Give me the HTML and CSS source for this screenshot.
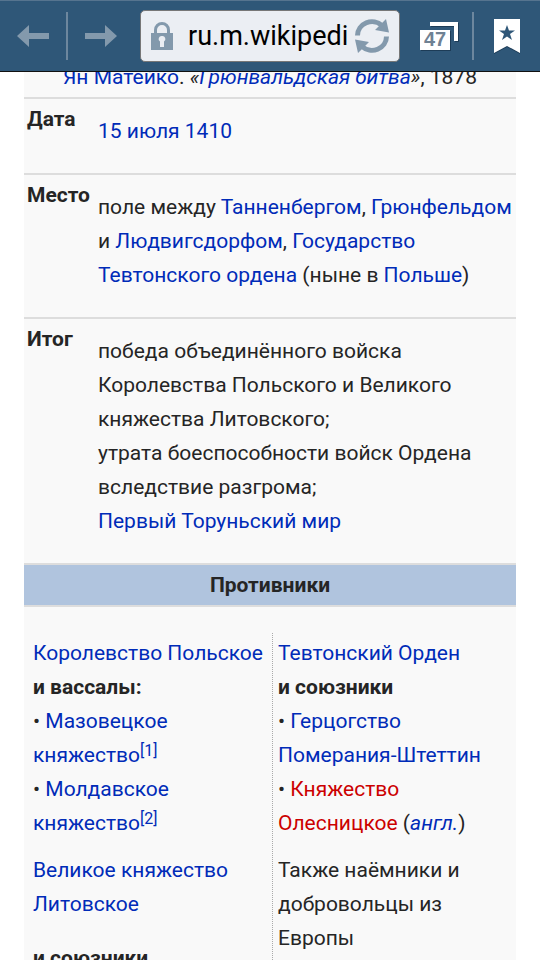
FILE: index.html
```
<!DOCTYPE html>
<html lang="ru">
<head>
	<meta charset="utf-8">
	<meta name="viewport" content="width=device-width, initial-scale=1">
	<title>Грюнвальдская битва</title>
	<link rel="stylesheet" href="styles.css">
</head>
<body>
	<header class="toolbar">
		<button class="nav-button" type="button" aria-label="Назад">
			<svg width="32" height="22" viewBox="0 0 32 22"><path d="M0 11 12 0v8h20v6H12v8z" fill="#8399ac"/></svg>
		</button>
		<span class="divider"></span>
		<button class="nav-button" type="button" aria-label="Вперёд">
			<svg width="32" height="22" viewBox="0 0 32 22"><path d="M32 11 20 0v8H0v6h20v8z" fill="#8399ac"/></svg>
		</button>

		<form class="address">
			<svg class="lock" width="22" height="28" viewBox="0 0 22 28">
				<path d="M4.500 12V8a6.500 6.500 0 0 1 13 0v4" fill="none" stroke="#8399ac" stroke-width="3"/>
				<path d="M0 11h22v17H0z" fill="#8399ac"/>
				<path d="M11 14a3 3 0 0 1 2 5.500V25H9v-5.500A3 3 0 0 1 11 14z" fill="#ebeef3"/>
			</svg>
			<input class="url" type="text" value="ru.m.wikipedi" aria-label="Адрес">
			<button class="reload" type="button" aria-label="Обновить">
				<svg width="34" height="34" viewBox="0 0 34 34">
					<g fill="none" stroke="#8399ac" stroke-width="5">
						<path d="M2.500 16.500A14.500 14 0 0 1 27 6.500"/>
						<path d="M31.500 17.500A14.500 14 0 0 1 7 27.500"/>
					</g>
					<path d="M31 0 34 13.500 20 11zM3 34 0 20.500 14 23z" fill="#8399ac"/>
				</svg>
			</button>
		</form>

		<button class="tabs" type="button" aria-label="Вкладки: 47">
			<svg width="40" height="30" viewBox="0 0 40 30">
				<path d="M11 2h28v19h-4V6H11z" fill="#1d3c57"/>
				<path d="M10 1h28v19h-4V5H10z" fill="#fff"/>
				<path d="M1 10h30v20H1z" fill="#1d3c57"/>
				<path d="M0 9h30v20H0z" fill="#fff"/>
				<text class="tab-count" x="15" y="25" text-anchor="middle">47</text>
			</svg>
		</button>
		<span class="divider"></span>
		<button class="bookmark" type="button" aria-label="Закладки">
			<svg width="26" height="36" viewBox="0 0 26 36">
				<path d="M0 2h26v34L13 29 0 36z" fill="#1d3c57"/>
				<path d="M0 1h26v34L13 28 0 35z" fill="#fff"/>
				<path d="m13 7 2 5.500h6l-5 3.500 2 6-5-3.500L8 22l2-6-5-3.500h6z" fill="#2f5778"/>
			</svg>
		</button>
	</header>

	<main class="content">
		<table class="infobox">
			<caption><a href="#">Ян Матейко</a>. <i>«<a href="#">Грюнвальдская битва</a>»</i>, 1878</caption>
			<tr>
				<th class="name">Дата</th>
				<td><a href="#">15 июля 1410</a></td>
			</tr>
			<tr>
				<th class="name">Место</th>
				<td>поле между <a href="#">Танненбергом</a>, <a href="#">Грюнфельдом</a> и <a href="#">Людвигсдорфом</a>, <a href="#">Государство<br>Тевтонского ордена</a> (ныне в <a href="#">Польше</a>)</td>
			</tr>
			<tr>
				<th class="name">Итог</th>
				<td>победа объединённого войска Королевства Польского и Великого княжества Литовского;<br>
				утрата боеспособности войск Ордена вследствие разгрома;<br>
				<a href="#">Первый Торуньский мир</a></td>
			</tr>
			<tr>
				<th class="heading" colspan="2">Противники</th>
			</tr>
			<tr>
				<td class="sides-cell" colspan="2">
					<div class="sides">
						<div class="side">
							<p><a href="#">Королевство Польское</a><br>
							<b>и вассалы:</b><br>
							• <a href="#">Мазовецкое<br>княжество</a><sup><a href="#">[1]</a></sup><br>
							• <a href="#">Молдавское<br>княжество</a><sup><a href="#">[2]</a></sup></p>
							<p><a href="#">Великое княжество Литовское</a></p>
							<p class="allies"><b>и союзники</b></p>
						</div>
						<div class="side">
							<p><a href="#">Тевтонский Орден</a><br>
							<b>и союзники</b><br>
							• <a href="#">Герцогство<br>Померания-Штеттин</a><br>
							• <a class="new" href="#">Княжество<br>Олесницкое</a> (<a href="#"><i>англ.</i></a>)</p>
							<p>Также наёмники и добровольцы из Европы</p>
						</div>
					</div>
				</td>
			</tr>
		</table>
	</main>
</body>
</html>
```
FILE: styles.css
```
*{
	box-sizing:border-box;
}

body{
	margin:0;
	height:100vh;
	overflow:hidden;
	background:#fff;
	color:#252525;
	font:21px/34px Roboto, "Noto Sans", sans-serif;
}

a{
	color:#002bb8;
	text-decoration:none;
}

	a.new{
		color:#cc0000;
	}

button{
	display:flex;
	margin:0;
	padding:0;
	border:0;
	background:none;
}

/* browser bar */
.toolbar{
	position:fixed;
	top:0;
	left:0;
	right:0;
	display:flex;
	align-items:center;
	height:72px;
	padding:0 20px 0 17px;
	background:#2f5778;
	border-top:1px solid #56748f;
	border-bottom:1px solid #111;
}

	.divider{
		width:2px;
		height:48px;
		margin:0 17px;
		background:#6d879e;
	}

	.address{
		flex:1;
		display:flex;
		align-items:center;
		min-width:0;
		height:52px;
		margin:0 20px 0 23px;
		padding:0 10px;
		background:#ebeef3;
		border:1px solid #777;
		border-radius:5px;
	}

		.lock{
			flex:none;
		}

		.url{
			flex:1;
			min-width:0;
			margin:0 6px 0 15px;
			padding:0;
			border:0;
			outline:0;
			background:none;
			color:#000;
			font:27px/40px Roboto, "Noto Sans", sans-serif;
		}

	.tab-count{
		fill:#6f8193;
		font:bold 20px "Liberation Sans", sans-serif;
	}

	.tabs + .divider{
		margin:0 20px 0 12px;
	}

/* article */
.content{
	padding:60px 24px 0;
}

.infobox{
	width:100%;
	table-layout:fixed;
	border-collapse:separate;
	border-spacing:0;
	background:#f9f9f9;
}

	.infobox caption{
		height:37px;
		background:#f9f9f9;
	}

	.infobox th,
	.infobox td{
		padding:15px 3px 25px;
		border-top:2px solid #ddd;
		text-align:left;
		vertical-align:top;
	}

	.infobox .name{
		width:71px;
		padding:3px 0 0 3px;
	}

	.infobox .heading{
		padding:3px;
		background:#b0c4de;
		text-align:center;
	}

	.infobox .sides-cell{
		padding:26px 0 0 6px;
	}

.sides{
	display:grid;
	grid-template-columns:1fr 1fr;
}

	.side{
		padding:3px 6px 24px 5px;
	}

	.side:first-child{
		padding-left:3px;
		border-right:1px dotted #aaa;
	}

	.side p{
		margin:0 0 13px;
	}

	.side .allies{
		margin-top:20px;
	}

	sup{
		font-size:16px;
		line-height:1;
		vertical-align:6px;
	}
```
